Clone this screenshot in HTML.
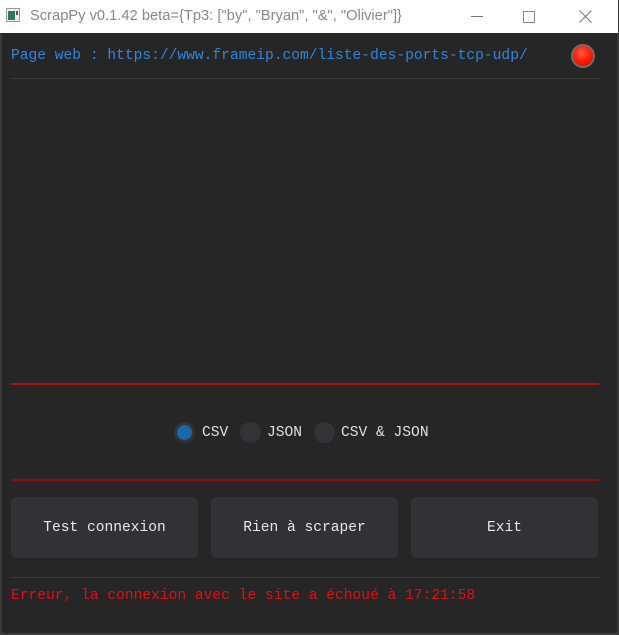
<!DOCTYPE html>
<html><head><meta charset="utf-8"><style>
*{margin:0;padding:0;box-sizing:border-box}
body{width:619px;height:635px;background:#3a3a3a;position:relative;overflow:hidden;font-family:"Liberation Mono",monospace}
.title{position:absolute;left:0;top:0;width:618px;height:33px;background:#fff;}
.title .t{position:absolute;left:30px;top:8px;font:14.7px "Liberation Sans",sans-serif;color:#888;}
.win{position:absolute;left:2px;top:33px;width:615px;height:600px;background:#262626;}
.abs{position:absolute}
.mono{font-size:14.6px;white-space:pre;line-height:18px}
.btn{position:absolute;top:497px;width:187px;height:61px;background:#323236;border-radius:6px;color:#e8e8e8;text-align:center;line-height:63px;font-size:14.6px}
.rad{position:absolute;top:422px;width:21px;height:21px;border-radius:50%;background:#333338}
</style></head><body>
<div class="title">
<svg class="abs" style="left:6px;top:8px" width="14" height="14"><rect x="0.5" y="0.5" width="13" height="13" fill="#eee" stroke="#999"/><rect x="2" y="3" width="7" height="9" fill="#2a7a6a"/><rect x="10" y="3" width="2" height="4" fill="#555"/></svg>
<div class="t">ScrapPy v0.1.42 beta={Tp3: ["by", "Bryan", "&amp;", "Olivier"]}</div>
<div class="abs" style="left:471px;top:16px;width:12px;height:1px;background:#777"></div>
<div class="abs" style="left:523px;top:11px;width:12px;height:12px;border:1px solid #888"></div>
<svg class="abs" style="left:579px;top:10px" width="13" height="13"><path d="M0.5 0.5L12.5 12.5M12.5 0.5L0.5 12.5" stroke="#777" stroke-width="1"/></svg>
</div>
<div class="win"></div>
<div class="abs mono" style="left:11px;top:47px;color:#2f86e0">Page web : https://www.frameip.com/liste-des-ports-tcp-udp/</div>
<div class="abs" style="left:571px;top:44px;width:24px;height:24px;border-radius:50%;background:#6e6e6e"></div>
<div class="abs" style="left:573px;top:46px;width:20px;height:20px;border-radius:50%;background:radial-gradient(circle at 45% 35%,#ff5a40,#ff1a00 50%,#d00000)"></div>
<div class="abs" style="left:11px;top:78px;width:588px;height:1px;background:#3c3c3c"></div>
<div class="abs" style="left:11px;top:383px;width:588px;height:2px;background:#b01010"></div>
<div class="rad" style="left:174px"></div>
<div class="abs" style="left:177px;top:425px;width:15px;height:15px;border-radius:50%;background:#1769a8"></div>
<div class="abs mono" style="left:202px;top:424px;color:#e0e0e0">CSV</div>
<div class="rad" style="left:240px"></div>
<div class="abs mono" style="left:267px;top:424px;color:#e0e0e0">JSON</div>
<div class="rad" style="left:314px"></div>
<div class="abs mono" style="left:341px;top:424px;color:#e0e0e0">CSV &amp; JSON</div>
<div class="abs" style="left:11px;top:479px;width:588px;height:2px;background:#8a1010"></div>
<div class="btn" style="left:11px">Test connexion</div>
<div class="btn" style="left:211px">Rien à scraper</div>
<div class="btn" style="left:411px">Exit</div>
<div class="abs" style="left:11px;top:577px;width:588px;height:1px;background:#3c3c3c"></div>
<div class="abs mono" style="left:11px;top:587px;color:#e01010">Erreur, la connexion avec le site a échoué à 17:21:58</div>
</body></html>
